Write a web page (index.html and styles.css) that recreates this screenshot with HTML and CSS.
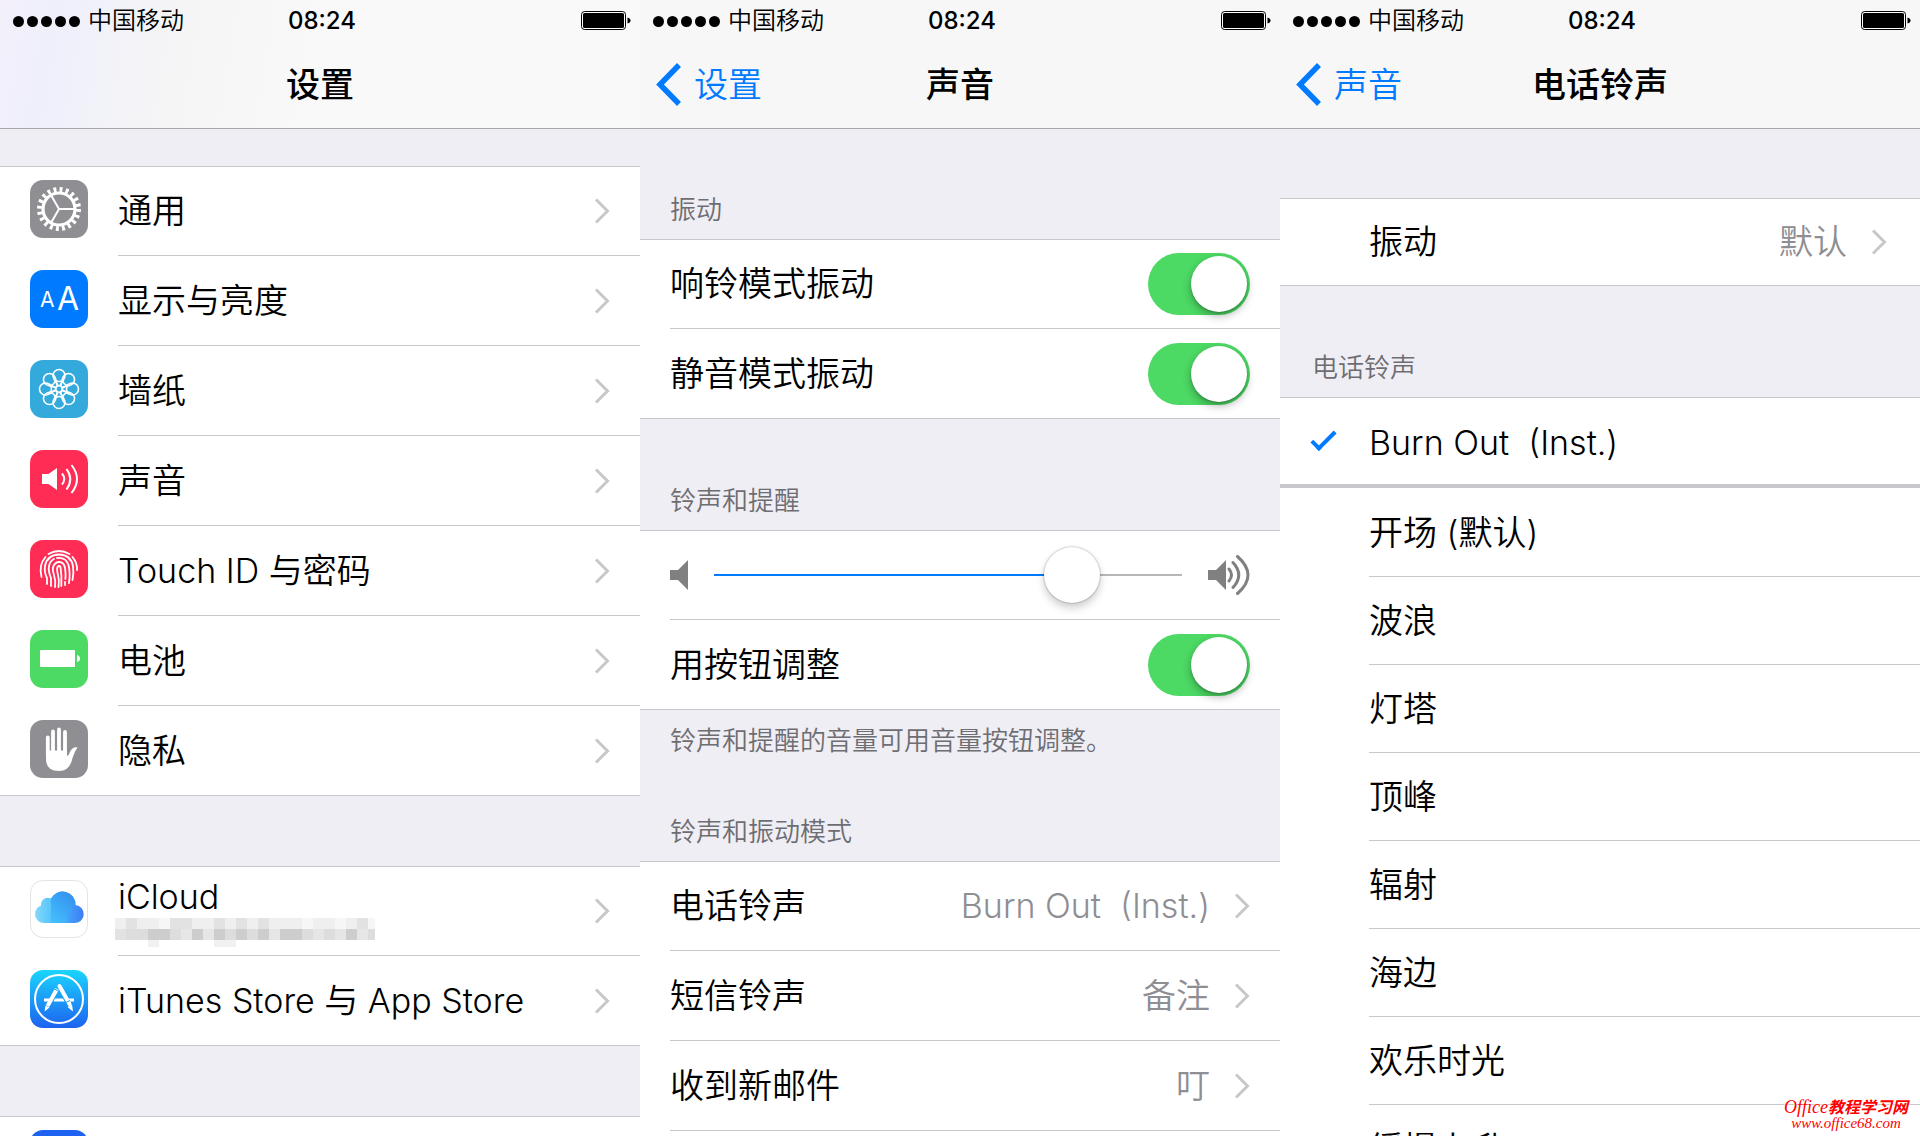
FILE: index.html
```html
<!DOCTYPE html>
<html lang="zh-CN">
<head>
  <meta charset="UTF-8">
  <meta name="viewport" content="width=device-width, initial-scale=1.0">
  <title>设置</title>
  <link rel="stylesheet" href="styles.css">
</head>
<body>

<!-- shared icons -->
<svg class="defs" width="0" height="0" aria-hidden="true">
  <symbol id="chevron" viewBox="0 0 16 26"><path d="M2 1.5 13.5 13 2 24.5" fill="none" stroke="#c7c7cc" stroke-width="3"/></symbol>
  <symbol id="back" viewBox="0 0 26 44"><path d="M23 2 4 21.500 23 41" fill="none" stroke="#007aff" stroke-width="5.500"/></symbol>
  <symbol id="battery" viewBox="0 0 50 20">
    <rect x="0.5" y="0.5" width="44" height="18" rx="3" fill="#fff" stroke="#000"/>
    <rect x="2" y="2" width="41" height="15" rx="1.5"/>
    <path d="M46.500 6.500c2 .5 3 1.500 3 3s-1 2.500-3 3z"/>
  </symbol>
</svg>

<main class="screens">

  <section class="screen settings">
    <header class="top tinted">
      <div class="status">
        <div class="carrier"><span class="dots"><i></i><i></i><i></i><i></i><i></i></span>中国移动</div>
        <time>08:24</time>
        <svg class="battery" width="50" height="20"><use href="#battery"/></svg>
      </div>
      <nav class="nav"><span></span><h1>设置</h1><span></span></nav>
    </header>

    <div class="group">
      <a class="row" href="#">
        <svg class="icon" viewBox="0 0 58 58" width="58" height="58">
          <rect width="58" height="58" rx="13" fill="#8e8e93"/>
          <g fill="none" stroke="#fff">
            <circle cx="29" cy="29" r="16" stroke-width="3.200"/>
            <circle cx="29" cy="29" r="19.500" stroke-width="5" stroke-dasharray="2.900 3.226"/>
            <path d="M29 29h15M29 29l-7.500-13M29 29l-7.500 13" stroke-width="2"/>
          </g>
        </svg>
        <span class="label">通用</span>
        <svg class="chevron" width="16" height="26"><use href="#chevron"/></svg>
      </a>
      <a class="row" href="#">
        <svg class="icon" viewBox="0 0 58 58" width="58" height="58">
          <rect width="58" height="58" rx="13" fill="#007aff"/>
          <text class="aa-small" x="10" y="37">A</text>
          <text class="aa-big" x="27" y="40">A</text>
        </svg>
        <span class="label">显示与亮度</span>
        <svg class="chevron" width="16" height="26"><use href="#chevron"/></svg>
      </a>
      <a class="row" href="#">
        <svg class="icon" viewBox="0 0 58 58" width="58" height="58">
          <rect width="58" height="58" rx="13" fill="#34aadc"/>
          <g fill="none" stroke="#fff" stroke-width="1.600">
            <circle cx="29" cy="29" r="3.200"/>
            <g id="petal"><circle cx="29" cy="15.500" r="6"/><path d="M24 19l4 6.500M34 19l-4 6.500"/></g>
            <use href="#petal" transform="rotate(45 29 29)"/>
            <use href="#petal" transform="rotate(90 29 29)"/>
            <use href="#petal" transform="rotate(135 29 29)"/>
            <use href="#petal" transform="rotate(180 29 29)"/>
            <use href="#petal" transform="rotate(225 29 29)"/>
            <use href="#petal" transform="rotate(270 29 29)"/>
            <use href="#petal" transform="rotate(315 29 29)"/>
          </g>
        </svg>
        <span class="label">墙纸</span>
        <svg class="chevron" width="16" height="26"><use href="#chevron"/></svg>
      </a>
      <a class="row" href="#">
        <svg class="icon" viewBox="0 0 58 58" width="58" height="58">
          <rect width="58" height="58" rx="13" fill="#ff2d55"/>
          <path d="M12 24h6.500L27 18v22l-8.500-6H12z" fill="#fff"/>
          <path d="M32 23.500q4.500 5.500 0 11M36.500 19q7.500 10 0 20.500M41.500 15q11 14 0 28" fill="none" stroke="#fff" stroke-width="2"/>
        </svg>
        <span class="label">声音</span>
        <svg class="chevron" width="16" height="26"><use href="#chevron"/></svg>
      </a>
      <a class="row" href="#">
        <svg class="icon" viewBox="0 0 58 58" width="58" height="58">
          <rect width="58" height="58" rx="13" fill="#ff2d55"/>
          <g fill="none" stroke="#fff" stroke-width="1.800" stroke-linecap="round">
            <path d="M18.500 14q10.500-6 21 0M11.500 37q-3-12 4-20M42.500 17q5 6 4.500 13"/>
            <path d="M17 44V38q-3-6-2-12 2-11 14-11.500 12 .5 14 11.500 1 7-.5 14"/>
            <path d="M21 46V38q-3-7-2-12 1-5 5-7M27 18q9-1 11.500 7 2 8 .5 18"/>
            <path d="M25 47q1-6-1-12-2-6-.500-9 2-4 5.500-4 5 0 6 6 1 7 .3 11M35 42v3"/>
            <path d="M28.500 47q1-7-.5-12-1.500-6-.5-8 1.500-2 3 0 1.500 9 .8 19"/>
          </g>
        </svg>
        <span class="label">Touch ID 与密码</span>
        <svg class="chevron" width="16" height="26"><use href="#chevron"/></svg>
      </a>
      <a class="row" href="#">
        <svg class="icon" viewBox="0 0 58 58" width="58" height="58">
          <rect width="58" height="58" rx="13" fill="#4cd964"/>
          <rect x="10" y="20" width="35" height="17" rx="1" fill="#fff"/>
          <path d="M47 25q3 1 3 3.500T47 32z" fill="#fff"/>
        </svg>
        <span class="label">电池</span>
        <svg class="chevron" width="16" height="26"><use href="#chevron"/></svg>
      </a>
      <a class="row" href="#">
        <svg class="icon" viewBox="0 0 58 58" width="58" height="58">
          <rect width="58" height="58" rx="13" fill="#8e8e93"/>
          <path d="M17.800 17.500V34M23 11.500V34M29 9.500V34M35 12V34" fill="none" stroke="#fff" stroke-width="3.800" stroke-linecap="round"/>
          <path d="M16 30.500h21V36q1.500 0 2.500-3 2.500-6.500 8-5.500-3 4-5 10.500-2.500 13-13.500 13Q16 51 16 39z" fill="#fff"/>
        </svg>
        <span class="label">隐私</span>
        <svg class="chevron" width="16" height="26"><use href="#chevron"/></svg>
      </a>
    </div>

    <div class="group">
      <a class="row" href="#">
        <svg class="icon" viewBox="0 0 58 58" width="58" height="58">
          <defs>
            <linearGradient id="cloud"><stop offset="0" stop-color="#86d8f8"/><stop offset="0.450" stop-color="#45bdfc"/><stop offset="1" stop-color="#3f7cf4"/></linearGradient>
            <linearGradient id="puff" x1="0" y1="1" x2="0.700" y2="0"><stop offset="0" stop-color="#45c1ff"/><stop offset="1" stop-color="#3592ee"/></linearGradient>
          </defs>
          <rect x="0.5" y="0.5" width="57" height="57" rx="12.500" fill="#fff" stroke="#e3e3e5"/>
          <path d="M14 43a9 9 0 0 1-3-17.500 7 7 0 0 1 10-7A13 13 0 0 1 45.500 25 9 9 0 0 1 44 43z" fill="url(#cloud)"/>
          <path d="M21 43V18.500A13 13 0 0 1 45.500 25q-5 3-7 8.500T36 43z" fill="url(#puff)"/>
        </svg>
        <span class="label account">iCloud
          <svg class="mosaic" viewBox="0 0 260 29" width="260" height="29" shape-rendering="crispEdges">
            <path fill="#efefef" d="M0 0h260v11H0z"/>
            <path fill="#dddddd" d="M0 11h260v11H0z"/>
            <path fill="#e2e2e2" d="M11 0h11v11H11zM55 0h22v11H55zM99 0h11v11H99zM121 0h11v11h-11zM143 0h11v11h-11zM242 0h11v11h-11zM0 11h11v11H0zM88 11h22v11H88zM154 11h11v11h-11z"/>
            <path fill="#f6f6f6" d="M44 0h11v11H44zM187 0h11v11h-11zM220 0h11v11h-11zM253 0h7v11h-7z"/>
            <path fill="#cdcdcd" d="M33 11h22v11H33zM77 11h11v11H77zM99 11h11v11H99zM121 11h11v11h-11zM143 11h11v11h-11zM165 11h22v11h-22zM231 11h11v11h-11z"/>
            <path fill="#e6e6e6" d="M66 11h11v11H66zM88 11h11v11H88zM154 11h11v11h-11zM198 11h11v11h-11zM220 11h11v11h-11zM242 11h11v11h-11z"/>
            <path fill="#f1f1f1" d="M33 22h11v7H33zM99 22h22v7H99z"/>
          </svg>
        </span>
        <svg class="chevron" width="16" height="26"><use href="#chevron"/></svg>
      </a>
      <a class="row" href="#">
        <svg class="icon" viewBox="0 0 58 58" width="58" height="58">
          <defs><linearGradient id="store" x2="0" y2="1"><stop offset="0" stop-color="#1ad5fd"/><stop offset="1" stop-color="#1d62f0"/></linearGradient></defs>
          <rect width="58" height="58" rx="13" fill="url(#store)"/>
          <circle cx="29" cy="29" r="24" fill="none" stroke="#fff" stroke-width="2"/>
          <path d="M14 28.500h7.500l-1.500 3h-6zM25 28.500h8l1.500 3H23.500zM37 28.500h7v3h-5.500z" fill="#fff"/>
          <path d="M27 19 17.500 36" stroke="#fff" stroke-width="4"/>
          <path d="M29.500 16 39.500 34" stroke="#fff" stroke-width="4" stroke-linecap="round"/>
          <path d="M15.500 35.500 19.500 37.500 14.500 41.500zM37.500 37 42 34.500 43 41.500z" fill="#fff"/>
          <path d="M24 18.500 28 21M35 33l5-2.500" stroke="#1c9bf7"/>
        </svg>
        <span class="label">iTunes Store 与 App Store</span>
        <svg class="chevron" width="16" height="26"><use href="#chevron"/></svg>
      </a>
    </div>

    <div class="group">
      <a class="row" href="#" aria-label="邮件">
        <svg class="icon" viewBox="0 0 58 58" width="58" height="58"><rect width="58" height="58" rx="13" fill="#1d62f0"/></svg>
        <span class="label"></span>
      </a>
    </div>
  </section>

  <section class="screen sounds">
    <header class="top">
      <div class="status">
        <div class="carrier"><span class="dots"><i></i><i></i><i></i><i></i><i></i></span>中国移动</div>
        <time>08:24</time>
        <svg class="battery" width="50" height="20"><use href="#battery"/></svg>
      </div>
      <nav class="nav">
        <a class="back" href="#"><svg width="26" height="44"><use href="#back"/></svg>设置</a>
        <h1>声音</h1><span></span>
      </nav>
    </header>

    <h2 class="section-title">振动</h2>
    <div class="group">
      <div class="row">
        <label class="label" for="ring">响铃模式振动</label>
        <input class="switch" type="checkbox" id="ring" checked>
      </div>
      <div class="row">
        <label class="label" for="silent">静音模式振动</label>
        <input class="switch" type="checkbox" id="silent" checked>
      </div>
    </div>

    <h2 class="section-title">铃声和提醒</h2>
    <div class="group">
      <div class="row">
        <div class="volume">
          <svg viewBox="0 0 18 30" width="18" height="30"><path d="M0 10h8l10-10v30L8 20H0z" fill="#808080"/></svg>
          <input type="range" min="0" max="100" value="80" aria-label="音量">
          <svg viewBox="0 0 42 40" width="42" height="40">
            <path d="M0 15h8L18 5v30L8 25H0z" fill="#808080"/>
            <path d="M21 14q5 6 0 12M25 7.500q11.500 12.500 0 25M29.500 1.500q21 18.500 0 37" fill="none" stroke="#808080" stroke-width="3" stroke-linecap="round"/>
          </svg>
        </div>
      </div>
      <div class="row">
        <label class="label" for="buttons">用按钮调整</label>
        <input class="switch" type="checkbox" id="buttons" checked>
      </div>
    </div>
    <p class="note">铃声和提醒的音量可用音量按钮调整。</p>

    <h2 class="section-title">铃声和振动模式</h2>
    <div class="group">
      <a class="row" href="#">
        <span class="label">电话铃声</span><span class="value">Burn Out&nbsp; (Inst.)</span>
        <svg class="chevron" width="16" height="26"><use href="#chevron"/></svg>
      </a>
      <a class="row" href="#">
        <span class="label">短信铃声</span><span class="value">备注</span>
        <svg class="chevron" width="16" height="26"><use href="#chevron"/></svg>
      </a>
      <a class="row" href="#">
        <span class="label">收到新邮件</span><span class="value">叮</span>
        <svg class="chevron" width="16" height="26"><use href="#chevron"/></svg>
      </a>
      <div class="row"></div>
    </div>
  </section>

  <section class="screen ringtones">
    <header class="top">
      <div class="status">
        <div class="carrier"><span class="dots"><i></i><i></i><i></i><i></i><i></i></span>中国移动</div>
        <time>08:24</time>
        <svg class="battery" width="50" height="20"><use href="#battery"/></svg>
      </div>
      <nav class="nav">
        <a class="back" href="#"><svg width="26" height="44"><use href="#back"/></svg>声音</a>
        <h1>电话铃声</h1><span></span>
      </nav>
    </header>

    <div class="group">
      <a class="row" href="#">
        <span class="label">振动</span><span class="value">默认</span>
        <svg class="chevron" width="16" height="26"><use href="#chevron"/></svg>
      </a>
    </div>

    <h2 class="section-title">电话铃声</h2>
    <div class="group store">
      <div class="row"><input type="radio" name="tone" id="t0" checked><label class="label" for="t0">Burn Out&nbsp; (Inst.)</label></div>
    </div>
    <div class="group tones">
      <div class="row"><input type="radio" name="tone" id="t1"><label class="label" for="t1">开场 (默认)</label></div>
      <div class="row"><input type="radio" name="tone" id="t2"><label class="label" for="t2">波浪</label></div>
      <div class="row"><input type="radio" name="tone" id="t3"><label class="label" for="t3">灯塔</label></div>
      <div class="row"><input type="radio" name="tone" id="t4"><label class="label" for="t4">顶峰</label></div>
      <div class="row"><input type="radio" name="tone" id="t5"><label class="label" for="t5">辐射</label></div>
      <div class="row"><input type="radio" name="tone" id="t6"><label class="label" for="t6">海边</label></div>
      <div class="row"><input type="radio" name="tone" id="t7"><label class="label" for="t7">欢乐时光</label></div>
      <div class="row"><input type="radio" name="tone" id="t8"><label class="label" for="t8">缓慢上升</label></div>
    </div>
  </section>

</main>

<div class="watermark"><div>Office<b>教程学习网</b></div><div class="site">www.office68.com</div></div>

</body>
</html>
```
FILE: styles.css
```css
*, *::before { box-sizing: border-box; }
body {
  margin: 0;
  height: 100vh;
  overflow: hidden;
  position: relative;
  background: #efeef4;
  color: #000;
  font-family: Inter, "Noto Sans CJK SC", sans-serif;
  font-size: 34px;
  font-weight: 350;
  line-height: 44px;
}
h1, h2, p { margin: 0; }
a { color: inherit; text-decoration: none; }
svg { flex: none; }
.defs { position: absolute; }

.screens {
  display: grid;
  grid-template-columns: repeat(3, 1fr);
  height: 100%;
}
.screen {
  min-width: 0;
  overflow: hidden;
}

/* status bar + title bar */
.top {
  height: 129px;
  background: #f7f7f8;
  border-bottom: 1px solid #a7a7aa;
}
.tinted { background: linear-gradient(100deg, #f3f0fa, #efeffc 8%, #f5f5f6 28%, #f9f9f9 50%); }
.status {
  display: grid;
  grid-template-columns: 1fr auto 1fr;
  align-items: center;
  height: 42px;
  padding: 0 9px 0 13px;
  font-size: 24px;
  line-height: 32px;
}
.status time { font-weight: 500; }
.carrier {
  display: flex;
  align-items: center;
  gap: 8px;
}
.dots { display: flex; gap: 3px; }
.dots i {
  width: 11px;
  height: 11px;
  border-radius: 50%;
  background: #000;
}
.battery { justify-self: end; }
.nav {
  display: grid;
  grid-template-columns: 1fr auto 1fr;
  align-items: center;
  height: 86px;
  padding: 0 16px;
}
.nav h1 {
  font-size: 34px;
  line-height: 44px;
  font-weight: 500;
}
.back {
  display: flex;
  align-items: center;
  gap: 12px;
  color: #007aff;
}

/* lists */
.group {
  background: #fff;
  box-shadow: inset 0 1px #c8c7cc;
}
.row {
  display: flex;
  align-items: center;
  height: 90px;
  padding: 0 30px;
  background: linear-gradient(#c8c7cc, #c8c7cc) right bottom / calc(100% - 30px) 1px no-repeat;
}
.group .row:last-child { background-size: 100% 1px; }
.label { flex: 1; }
.value {
  color: #8e8e93;
  margin-right: 24px;
}
.icon { margin: 0 30px 4px 0; }
.settings .row { background-size: calc(100% - 118px) 1px; }
.settings .group .row:last-child { background-size: 100% 1px; }
.settings .group { margin-top: 70px; }
.settings .top + .group { margin-top: 37px; }
.account {
  display: flex;
  flex-direction: column;
  line-height: 42px;
}
.mosaic { margin-left: -3px; }
.aa-small, .aa-big { fill: #fff; font-weight: 400; }
.aa-small { font-size: 21px; }
.aa-big { font-size: 32px; }

.section-title {
  padding: 65px 30px 12px;
  font-size: 26px;
  line-height: 34px;
  font-weight: 350;
  color: #6d6d72;
}
.top + .section-title { padding-top: 64px; }
.note {
  padding: 14px 30px 0;
  font-size: 26px;
  line-height: 34px;
  color: #6d6d72;
}
.note + .section-title { padding-top: 57px; }

.switch {
  appearance: none;
  width: 102px;
  height: 62px;
  margin: 0;
  padding: 3px;
  border-radius: 31px;
  background: #e5e5ea;
}
.switch::before {
  content: "";
  display: block;
  width: 56px;
  height: 56px;
  border-radius: 50%;
  background: #fff;
  box-shadow: 0 4px 8px rgba(0, 0, 0, 0.3), 0 1px 2px rgba(0, 0, 0, 0.2);
}
.switch:checked { background: #4cd964; }
.switch:checked::before { margin-left: 40px; }

.volume {
  flex: 1;
  display: flex;
  align-items: center;
  gap: 26px;
}
.volume input {
  appearance: none;
  flex: 1;
  min-width: 0;
  height: 58px;
  margin: 0;
  background: linear-gradient(#007aff, #007aff) left / 80% 2px no-repeat, linear-gradient(#b7b7b7, #b7b7b7) center / 100% 2px no-repeat;
}
.volume input::-webkit-slider-thumb {
  appearance: none;
  width: 56px;
  height: 56px;
  border-radius: 50%;
  background: #fff;
  box-shadow: 0 5px 8px rgba(0, 0, 0, 0.2), 0 0 2px rgba(0, 0, 0, 0.4);
}

/* ringtones */
.ringtones .row { height: 88px; padding: 0 33px 0 31px; }
.ringtones .top + .group { margin-top: 69px; }
.ringtones .section-title { padding-left: 32px; }
.ringtones a .label { padding-left: 58px; }
.ringtones .store .row {
  height: 91px;
  background-size: 100% 4px;
}
.tones {
  padding-top: 1px;
  box-shadow: none;
}
.tones .row { background-size: calc(100% - 89px) 1px; }
.ringtones input {
  appearance: none;
  width: 26px;
  height: 26px;
  margin: 0 32px 4px 0;
}
.ringtones input:checked::before {
  content: "";
  display: block;
  width: 25px;
  height: 12px;
  margin-top: 4px;
  border: solid #007aff;
  border-width: 0 0 4px 4px;
  transform: rotate(-45deg);
}

.watermark {
  position: absolute;
  right: 12px;
  bottom: 6px;
  text-align: center;
  color: #f00;
  font: italic 18px/16px "Liberation Serif", "Noto Sans CJK SC", serif;
  text-shadow: 0 0 2px #fff, 0 0 2px #fff;
}
.watermark b { font-size: 16px; }
.watermark .site { font-size: 15px; line-height: 14px; }
```
